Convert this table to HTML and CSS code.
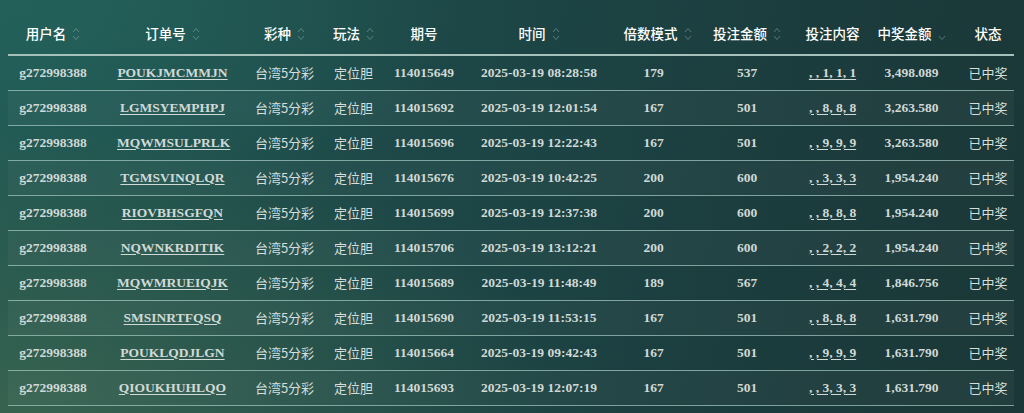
FILE: index.html
```html
<!DOCTYPE html>
<html lang="zh-CN">
<head>
<meta charset="utf-8">
<title>中奖记录</title>
<link rel="stylesheet" href="styles.css">
</head>
<body>
<div class="page">
<table class="grid">
<colgroup>
<col class="c1"><col class="c2"><col class="c3"><col class="c4"><col class="c5"><col class="c6"><col class="c7"><col class="c8"><col class="c9"><col class="c10"><col class="c11">
</colgroup>
<thead>
<tr>
<th>用户名<span class="sort"><svg viewBox="0 0 8 16"><path d="M1 6 L4 2.5 L7 6"/><path d="M1 10 L4 13.5 L7 10"/></svg></span></th>
<th>订单号<span class="sort"><svg viewBox="0 0 8 16"><path d="M1 6 L4 2.5 L7 6"/><path d="M1 10 L4 13.5 L7 10"/></svg></span></th>
<th>彩种<span class="sort"><svg viewBox="0 0 8 16"><path d="M1 6 L4 2.5 L7 6"/><path d="M1 10 L4 13.5 L7 10"/></svg></span></th>
<th>玩法<span class="sort"><svg viewBox="0 0 8 16"><path d="M1 6 L4 2.5 L7 6"/><path d="M1 10 L4 13.5 L7 10"/></svg></span></th>
<th>期号</th>
<th>时间<span class="sort"><svg viewBox="0 0 8 16"><path d="M1 6 L4 2.5 L7 6"/><path d="M1 10 L4 13.5 L7 10"/></svg></span></th>
<th>倍数模式<span class="sort"><svg viewBox="0 0 8 16"><path d="M1 6 L4 2.5 L7 6"/><path d="M1 10 L4 13.5 L7 10"/></svg></span></th>
<th>投注金额<span class="sort"><svg viewBox="0 0 8 16"><path d="M1 6 L4 2.5 L7 6"/><path d="M1 10 L4 13.5 L7 10"/></svg></span></th>
<th>投注内容</th>
<th>中奖金额<span class="sort"><svg viewBox="0 0 8 16"><path d="M1 10 L4 13.5 L7 10"/></svg></span></th>
<th>状态</th>
</tr>
</thead>
<tbody>
<tr><td class="num">g272998388</td><td class="num"><a>POUKJMCMMJN</a></td><td class="zh">台湾5分彩</td><td class="zh">定位胆</td><td class="num">114015649</td><td class="num">2025-03-19 08:28:58</td><td class="num">179</td><td class="num">537</td><td class="num"><a>, , 1, 1, 1</a></td><td class="num">3,498.089</td><td class="zh">已中奖</td></tr>
<tr><td class="num">g272998388</td><td class="num"><a>LGMSYEMPHPJ</a></td><td class="zh">台湾5分彩</td><td class="zh">定位胆</td><td class="num">114015692</td><td class="num">2025-03-19 12:01:54</td><td class="num">167</td><td class="num">501</td><td class="num"><a>, , 8, 8, 8</a></td><td class="num">3,263.580</td><td class="zh">已中奖</td></tr>
<tr><td class="num">g272998388</td><td class="num"><a>MQWMSULPRLK</a></td><td class="zh">台湾5分彩</td><td class="zh">定位胆</td><td class="num">114015696</td><td class="num">2025-03-19 12:22:43</td><td class="num">167</td><td class="num">501</td><td class="num"><a>, , 9, 9, 9</a></td><td class="num">3,263.580</td><td class="zh">已中奖</td></tr>
<tr><td class="num">g272998388</td><td class="num"><a>TGMSVINQLQR</a></td><td class="zh">台湾5分彩</td><td class="zh">定位胆</td><td class="num">114015676</td><td class="num">2025-03-19 10:42:25</td><td class="num">200</td><td class="num">600</td><td class="num"><a>, , 3, 3, 3</a></td><td class="num">1,954.240</td><td class="zh">已中奖</td></tr>
<tr><td class="num">g272998388</td><td class="num"><a>RIOVBHSGFQN</a></td><td class="zh">台湾5分彩</td><td class="zh">定位胆</td><td class="num">114015699</td><td class="num">2025-03-19 12:37:38</td><td class="num">200</td><td class="num">600</td><td class="num"><a>, , 8, 8, 8</a></td><td class="num">1,954.240</td><td class="zh">已中奖</td></tr>
<tr><td class="num">g272998388</td><td class="num"><a>NQWNKRDITIK</a></td><td class="zh">台湾5分彩</td><td class="zh">定位胆</td><td class="num">114015706</td><td class="num">2025-03-19 13:12:21</td><td class="num">200</td><td class="num">600</td><td class="num"><a>, , 2, 2, 2</a></td><td class="num">1,954.240</td><td class="zh">已中奖</td></tr>
<tr><td class="num">g272998388</td><td class="num"><a>MQWMRUEIQJK</a></td><td class="zh">台湾5分彩</td><td class="zh">定位胆</td><td class="num">114015689</td><td class="num">2025-03-19 11:48:49</td><td class="num">189</td><td class="num">567</td><td class="num"><a>, , 4, 4, 4</a></td><td class="num">1,846.756</td><td class="zh">已中奖</td></tr>
<tr><td class="num">g272998388</td><td class="num"><a>SMSINRTFQSQ</a></td><td class="zh">台湾5分彩</td><td class="zh">定位胆</td><td class="num">114015690</td><td class="num">2025-03-19 11:53:15</td><td class="num">167</td><td class="num">501</td><td class="num"><a>, , 8, 8, 8</a></td><td class="num">1,631.790</td><td class="zh">已中奖</td></tr>
<tr><td class="num">g272998388</td><td class="num"><a>POUKLQDJLGN</a></td><td class="zh">台湾5分彩</td><td class="zh">定位胆</td><td class="num">114015664</td><td class="num">2025-03-19 09:42:43</td><td class="num">167</td><td class="num">501</td><td class="num"><a>, , 9, 9, 9</a></td><td class="num">1,631.790</td><td class="zh">已中奖</td></tr>
<tr><td class="num">g272998388</td><td class="num"><a>QIOUKHUHLQO</a></td><td class="zh">台湾5分彩</td><td class="zh">定位胆</td><td class="num">114015693</td><td class="num">2025-03-19 12:07:19</td><td class="num">167</td><td class="num">501</td><td class="num"><a>, , 3, 3, 3</a></td><td class="num">1,631.790</td><td class="zh">已中奖</td></tr>
</tbody>
</table>
</div>
</body>
</html>
```
FILE: styles.css
```css
html, body {
  margin: 0;
  padding: 0;
  height: 100%;
}
body {
  background:
    radial-gradient(ellipse 55% 70% at 0% 100%, rgba(62, 104, 80, 0.75), rgba(62, 104, 80, 0) 100%),
    radial-gradient(ellipse 45% 60% at 0% 0%, rgba(36, 98, 92, 0.9), rgba(36, 98, 92, 0) 100%),
    linear-gradient(100deg, #215650 0%, #1d4646 45%, #1b3c3d 75%, #1b3737 100%);
  font-family: "Liberation Serif", "Noto Sans CJK SC", serif;
  color: #d3dcd9;
  overflow: hidden;
}
.page {
  padding: 0 10px 0 8px;
}
.grid {
  width: 1006px;
  border-collapse: collapse;
  table-layout: fixed;
}
.c1 { width: 109px; }
.c2 { width: 111px; }
.c3 { width: 91px; }
.c4 { width: 69px; }
.c5 { width: 93px; }
.c6 { width: 116px; }
.c7 { width: 105px; }
.c8 { width: 90px; }
.c9 { width: 81px; }
.c10 { width: 77px; }
.c11 { width: 64px; }

.grid th {
  height: 55px;
  box-sizing: border-box;
  padding: 22px 0 10px;
  font-family: "Noto Sans CJK SC", "Noto Sans", sans-serif;
  font-size: 13.5px;
  font-weight: 500;
  color: #ffffff;
  text-align: center;
  white-space: nowrap;
  line-height: 20px;
  border-bottom: 2px solid #a6c1bc;
}
.grid td {
  height: 35px;
  box-sizing: border-box;
  padding: 0;
  text-align: center;
  white-space: nowrap;
  border-bottom: 1px solid rgba(160, 196, 190, 0.75);
  vertical-align: middle;
}
.grid tbody tr:nth-child(even) td {
  background: rgba(255, 255, 255, 0.035);
}
.grid th:nth-child(1), .grid td:nth-child(1) { padding-right: 19px; }
.grid th:nth-child(3), .grid td:nth-child(3) { padding-left: 22px; }
.grid th:nth-child(5), .grid td:nth-child(5) { padding-right: 21px; }
.grid td:nth-child(7) { padding-left: 8px; }
.grid th:nth-child(7) { padding-left: 16px; }
.grid th:nth-child(11), .grid td:nth-child(11) { padding-left: 12px; }

.num {
  font-family: "Liberation Serif", serif;
  font-weight: 700;
  font-size: 13.5px;
  color: #d0d9d6;
}
.zh {
  font-family: "Noto Sans CJK SC", "Noto Sans", sans-serif;
  font-size: 13px;
  color: #d6dedb;
}
.num a {
  color: #d0d9d6;
  text-decoration: underline;
  text-underline-offset: 2px;
}
.sort {
  display: inline-block;
  width: 8px;
  height: 16px;
  margin-left: 6px;
  vertical-align: -3px;
}
.sort svg {
  display: block;
  width: 8px;
  height: 16px;
  fill: none;
  stroke: rgba(200, 220, 215, 0.35);
  stroke-width: 1;
}
```
